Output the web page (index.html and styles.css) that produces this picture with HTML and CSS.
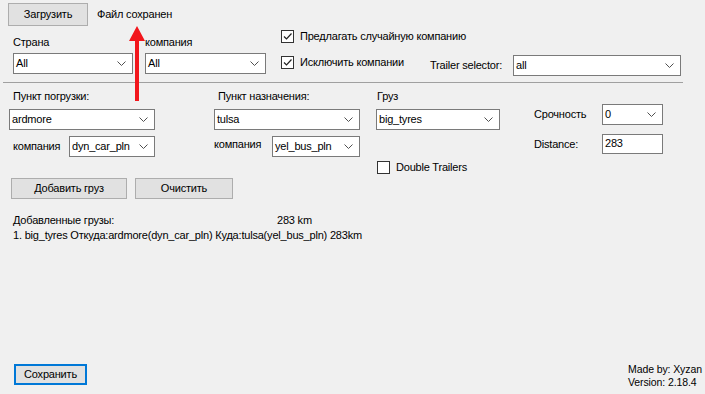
FILE: index.html
```html
<!DOCTYPE html>
<html lang="ru">
<head>
  <meta charset="UTF-8" />
  <title>Cargo</title>
  <link rel="stylesheet" href="styles.css">
</head>
<body>
  <div class="top">
    <div class="btn btn-load">Загрузить</div>
    <span class="status">Файл сохранен</span>
  </div>

  <div class="section-one">
    <div class="field field-country">
      <div class="label">Страна</div>
      <div class="combo"><span>All</span><svg width="9" height="5"><path d="M0.5 0.5 L4.5 4.5 L8.5 0.5" /></svg></div>
    </div>
    <div class="field field-company">
      <div class="label">компания</div>
      <div class="combo"><span>All</span><svg width="9" height="5"><path d="M0.5 0.5 L4.5 4.5 L8.5 0.5" /></svg></div>
    </div>
    <div class="checks">
      <div class="check"><span class="box checked"><svg width="11" height="11"><path d="M2 5.5 L4.5 8 L9.5 2.5" /></svg></span>Предлагать случайную компанию</div>
      <div class="check check-second"><span class="box checked"><svg width="11" height="11"><path d="M2 5.5 L4.5 8 L9.5 2.5" /></svg></span>Исключить компании</div>
    </div>
    <div class="trailer">
      <span class="trailer-label">Trailer selector:</span>
      <div class="combo combo-trailer"><span>all</span><svg width="9" height="5"><path d="M0.5 0.5 L4.5 4.5 L8.5 0.5" /></svg></div>
    </div>
  </div>

  <div class="divider"></div>

  <div class="section-two">
    <div class="col col-from">
      <div class="label">Пункт погрузки:</div>
      <div class="combo combo-city"><span>ardmore</span><svg width="9" height="5"><path d="M0.5 0.5 L4.5 4.5 L8.5 0.5" /></svg></div>
      <div class="company-row">
        <span class="company-label">компания</span>
        <div class="combo combo-from-co"><span>dyn_car_pln</span><svg width="9" height="5"><path d="M0.5 0.5 L4.5 4.5 L8.5 0.5" /></svg></div>
      </div>
    </div>
    <div class="col col-to">
      <div class="label">Пункт назначения:</div>
      <div class="combo combo-city"><span>tulsa</span><svg width="9" height="5"><path d="M0.5 0.5 L4.5 4.5 L8.5 0.5" /></svg></div>
      <div class="company-row">
        <span class="company-label">компания</span>
        <div class="combo combo-to-co"><span>yel_bus_pln</span><svg width="9" height="5"><path d="M0.5 0.5 L4.5 4.5 L8.5 0.5" /></svg></div>
      </div>
    </div>
    <div class="col col-cargo">
      <div class="label">Груз</div>
      <div class="combo combo-cargo"><span>big_tyres</span><svg width="9" height="5"><path d="M0.5 0.5 L4.5 4.5 L8.5 0.5" /></svg></div>
      <div class="check check-double"><span class="box"></span>Double Trailers</div>
    </div>
    <div class="col col-extra">
      <div class="extra-row">
        <span class="extra-label">Срочность</span>
        <div class="combo combo-small"><span>0</span><svg width="9" height="5"><path d="M0.5 0.5 L4.5 4.5 L8.5 0.5" /></svg></div>
      </div>
      <div class="extra-row extra-distance">
        <span class="extra-label">Distance:</span>
        <div class="textbox">283</div>
      </div>
    </div>
  </div>

  <div class="actions">
    <div class="btn btn-add">Добавить груз</div>
    <div class="btn btn-clear">Очистить</div>
  </div>

  <div class="result">
    <div class="result-head"><span class="result-title">Добавленные грузы:</span><span>283 km</span></div>
    <div>1. big_tyres Откуда:ardmore(dyn_car_pln) Куда:tulsa(yel_bus_pln) 283km</div>
  </div>

  <div class="footer">
    <div class="btn btn-save">Сохранить</div>
    <div class="credits">
      <div>Made by: Xyzan</div>
      <div>Version: 2.18.4</div>
    </div>
  </div>

  <svg class="arrow" width="18" height="76" viewBox="0 0 18 76">
    <polygon points="9,0 17,15 11,15 11,75 7,75 7,15 1,15" />
  </svg>
</body>
</html>
```

FILE: styles.css
```css
:root {
  --bg: #f0f0f0;
  --btn-bg: #e1e1e1;
  --btn-border: #adadad;
  --field-border: #7a7a7a;
  --text: #000000;
}

body {
  margin: 0;
  width: 705px;
  height: 394px;
  background-color: var(--bg);
  color: var(--text);
  font-family: "Liberation Sans", Arial, sans-serif;
  font-size: 11px;
  letter-spacing: -0.2px;
  line-height: 15px;
  white-space: nowrap;
  display: flex;
  flex-direction: column;
  position: relative;
  overflow: hidden;
}

.btn {
  box-sizing: border-box;
  background-color: var(--btn-bg);
  border: 1px solid var(--btn-border);
  display: flex;
  align-items: center;
  justify-content: center;
}

.top {
  height: 27px;
  display: flex;
  align-items: flex-start;
  padding: 3px 0 0 8px;
  box-sizing: border-box;
}

.btn-load {
  width: 80px;
  height: 23px;
}

.status {
  margin: 4px 0 0 9px;
}

/* combo boxes */
.combo {
  box-sizing: border-box;
  height: 21px;
  background: #ffffff;
  border: 1px solid var(--field-border);
  display: flex;
  align-items: center;
  justify-content: space-between;
  padding: 0 6px 0 2px;
}

.combo svg path {
  fill: none;
  stroke: #505050;
  stroke-width: 1;
}

.textbox {
  box-sizing: border-box;
  height: 20px;
  width: 61px;
  background: #ffffff;
  border: 1px solid var(--field-border);
  padding: 1px 2px;
}

/* checkboxes */
.check {
  display: flex;
  align-items: center;
  height: 15px;
}

.box {
  box-sizing: border-box;
  width: 13px;
  height: 13px;
  background: #ffffff;
  border: 1px solid #333333;
  margin-right: 6px;
  display: flex;
  align-items: center;
  justify-content: center;
}

.box svg path {
  fill: none;
  stroke: #222222;
  stroke-width: 1.2;
}

/* first block */
.section-one {
  height: 55px;
  display: flex;
  align-items: flex-start;
}

.field {
  padding-top: 8px;
}

.field .label {
  margin-bottom: 3px;
}

.field-country {
  margin-left: 13px;
  width: 120px;
}

.field-company {
  margin-left: 12px;
  width: 121px;
}

.checks {
  margin-left: 15px;
  width: 149px;
  padding-top: 2px;
}

.check-second {
  margin-top: 11px;
}

.trailer {
  display: flex;
  align-items: center;
  padding-top: 28px;
}

.trailer-label {
  width: 83px;
}

.combo-trailer {
  width: 168px;
}

.divider {
  margin-left: 3px;
  width: 680px;
  border-top: 1px solid #a0a0a0;
}

/* second block */
.section-two {
  height: 95px;
  display: flex;
  align-items: flex-start;
}

.col {
  padding-top: 6px;
}

.col .label {
  margin-bottom: 5px;
}

.col-from {
  margin-left: 9px;
  width: 146px;
}

.col-from .label {
  padding-left: 4px;
}

.col-to {
  margin-left: 59px;
  width: 146px;
}

.col-to .label {
  padding-left: 4px;
}

.combo-city {
  width: 146px;
}

.company-row {
  display: flex;
  align-items: center;
  justify-content: space-between;
  margin-top: 6px;
}

.col-from .company-label {
  padding-left: 4px;
}

.col-to .company-label {
  margin-top: -4px;
}

.combo-from-co {
  width: 86px;
}

.combo-to-co {
  width: 88px;
}

.col-cargo {
  margin-left: 16px;
  width: 124px;
}

.col-cargo .label {
  padding-left: 1px;
}

.combo-cargo {
  width: 124px;
}

.check-double {
  margin: 30px 0 0 1px;
}

.col-extra {
  margin-left: 34px;
  padding-top: 21px;
}

.extra-row {
  display: flex;
  align-items: center;
}

.extra-label {
  width: 68px;
}

.combo-small {
  width: 61px;
}

.extra-distance {
  margin-top: 9px;
}

/* actions */
.actions {
  display: flex;
  gap: 8px;
  padding-left: 11px;
}

.btn-add {
  width: 116px;
  height: 21px;
}

.btn-clear {
  width: 98px;
  height: 21px;
}

.result {
  margin: 14px 0 0 13px;
}

.result-title {
  display: inline-block;
  width: 264px;
}

/* footer */
.footer {
  margin-top: auto;
  display: flex;
  align-items: flex-end;
  justify-content: space-between;
  padding: 0 0 9px 14px;
}

.btn-save {
  width: 73px;
  height: 21px;
  border: 2px solid #0078d7;
}

.credits {
  width: 77px;
  font-size: 10.5px;
  letter-spacing: -0.1px;
  line-height: 13px;
  margin-bottom: -4px;
}

.arrow {
  position: absolute;
  left: 128px;
  top: 26px;
}

.arrow polygon {
  fill: #f2161c;
}
```
